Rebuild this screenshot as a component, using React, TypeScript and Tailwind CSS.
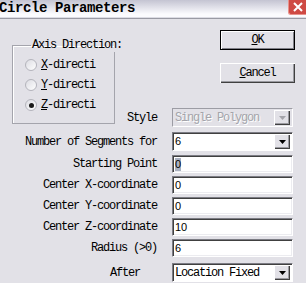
import React from 'react';

const mono = "font-['Liberation_Mono',monospace] text-[12px] tracking-[-1.2px] leading-[14px]";

function Arrow({ disabled }: { disabled?: boolean }) {
    return (
        <div className="w-[16px] h-[15px] bg-[#e2e1e7] shadow-[inset_1px_1px_0_#ffffff,inset_-1px_-1px_0_#404040,inset_-2px_-2px_0_#9a9aa0] flex items-center justify-center">
            <svg width="7" height="4" viewBox="0 0 7 4">
                <polygon points="0,0 7,0 3.5,4" fill={disabled ? '#a4a4aa' : '#000000'} />
            </svg>
        </div>
    );
}

function Combo({ text, disabled, mono: isMono }: { text: string; disabled?: boolean; mono?: boolean }) {
    return (
        <div
            className={`w-[121px] h-[19px] flex items-center justify-between pl-[2px] pr-[2px] border-[1px] ${disabled ? 'bg-[#e2e1e7] border-t-[#9c9ca4] border-l-[#9c9ca4] border-b-white border-r-white' : 'bg-white border-t-[#7c7c84] border-l-[#7c7c84] border-b-white border-r-white shadow-[inset_1px_1px_0_#404040]'}`}
        >
            <span
                className={`${isMono ? mono : "font-['Liberation_Sans',sans-serif] text-[11px]"} whitespace-nowrap ${disabled ? 'text-[#a4a4aa] [text-shadow:1px_1px_0_#ffffff]' : 'text-black'}`}
            >
                {text}
            </span>
            <Arrow disabled={disabled} />
        </div>
    );
}

function Field({ value, selected }: { value: string; selected?: boolean }) {
    return (
        <div className="w-[121px] h-[18px] bg-white border-[1px] border-t-[#7c7c84] border-l-[#7c7c84] border-b-white border-r-white shadow-[inset_1px_1px_0_#404040,inset_-1px_-1px_0_#ececf0] flex items-center pl-[2px]">
            <span className={`font-['Liberation_Sans',sans-serif] text-[11px] leading-[13px] text-black ${selected ? 'bg-[#aab1c0]' : ''}`}>
                {value}
            </span>
        </div>
    );
}

function Row({ label, children, pr = 0, mt = 'mt-[3px]' }: { label: string; children: React.ReactNode; pr?: number; mt?: string }) {
    return (
        <div className={`flex items-center ${mt}`}>
            <div className={`w-[157px] whitespace-nowrap text-right text-black ${mono}`} style={{ paddingRight: pr }}>
                {label}
            </div>
            <div className="ml-[15px]">{children}</div>
        </div>
    );
}

function Radio({ letter, rest, checked }: { letter: string; rest: string; checked?: boolean }) {
    return (
        <div className="h-[20px] flex items-center">
            <div className="w-[12px] h-[12px] rounded-full border border-[#b4b4bc] bg-gradient-to-br from-[#dcdce2] to-white flex items-center justify-center">
                {checked && <div className="w-[5px] h-[5px] rounded-full bg-[#1a1a1a]" />}
            </div>
            <span className={`ml-[4px] whitespace-nowrap text-black ${mono}`}>
                <span className="underline">{letter}</span>
                {rest}
            </span>
        </div>
    );
}

function Button({ first, rest, isDefault }: { first: string; rest: string; isDefault?: boolean }) {
    return (
        <div className={`w-[75px] h-[20px] ${isDefault ? 'border border-black' : ''}`}>
            <div
                className={`w-full h-full bg-[#e2e1e7] flex items-center justify-center text-black ${mono} ${isDefault ? 'shadow-[inset_1px_1px_0_#ffffff,inset_-1px_-1px_0_#808088]' : 'shadow-[inset_1px_1px_0_#ffffff,inset_-1px_-1px_0_#404040,inset_-2px_-2px_0_#9a9aa0]'}`}
            >
                <span>
                    <span className="underline">{first}</span>
                    {rest}
                </span>
            </div>
        </div>
    );
}

export default function App() {
    return (
        <div className="w-[306px] h-[283px] overflow-hidden bg-[#e2e1e7] flex flex-col relative">
            {/* Title bar */}
            <div className="flex flex-col">
                <div className="h-[14px] bg-gradient-to-b from-[#c4c4d2] to-[#fbfbfe] flex items-center">
                    <span className="font-['Liberation_Mono',monospace] font-bold text-[14px] tracking-[-0.4px] leading-[14px] text-black -ml-[1px] mt-[1px]">
                        Circle Parameters
                    </span>
                </div>
                <div className="h-[3px] bg-[#fbfbfe]" />
                <div className="h-[1px] bg-[#dcdce4]" />
                <div className="h-[1px] bg-[#9a9aa4]" />
            </div>
            <div className="absolute top-0 right-0 w-[18px] h-[15px] bg-[#cf4a44] rounded-bl-[3px] border-l border-b border-[#e8928c] flex items-center justify-center">
                <svg width="10" height="10" viewBox="0 0 10 10">
                    <path d="M1 1 L9 9 M9 1 L1 9" stroke="#ffffff" strokeWidth="2" />
                </svg>
            </div>

            {/* Top section */}
            <div className="flex">
                <fieldset className="ml-[12px] mt-[19px] w-[103px] h-[86px] border border-[#a4a4ac] shadow-[inset_1px_1px_0_#ffffff] pl-[12px] min-w-0">
                    <legend className={`ml-[6px] px-[1px] whitespace-nowrap text-black ${mono}`}>Axis Direction:</legend>
                    <div className="flex flex-col pt-[3px]">
                        <Radio letter="X" rest="-directi" />
                        <Radio letter="Y" rest="-directi" />
                        <Radio letter="Z" rest="-directi" checked />
                    </div>
                </fieldset>
                <div className="flex-1 flex flex-col">
                    <div className="flex flex-col items-end pr-[11px]">
                        <div className="mt-[11px]">
                            <Button first="O" rest="K" isDefault />
                        </div>
                        <div className="mt-[13px]">
                            <Button first="C" rest="ancel" />
                        </div>
                    </div>
                    <div className="flex items-center mt-[25px]">
                        <div className={`w-[42px] text-right text-black ${mono}`}>Style</div>
                        <div className="ml-[15px]">
                            <Combo text="Single Polygon" disabled mono />
                        </div>
                    </div>
                </div>
            </div>

            {/* Rows */}
            <Row label="Number of Segments for" mt="mt-[5px]">
                <Combo text="6" />
            </Row>
            <Row label="Starting Point" mt="mt-[4px]">
                <Field value="0" selected />
            </Row>
            <Row label="Center X-coordinate">
                <Field value="0" />
            </Row>
            <Row label="Center Y-coordinate">
                <Field value="0" />
            </Row>
            <Row label="Center Z-coordinate">
                <Field value="10" />
            </Row>
            <Row label="Radius (>0)">
                <Field value="6" />
            </Row>
            <Row label="After" pr={17} mt="mt-[6px]">
                <Combo text="Location Fixed" mono />
            </Row>
        </div>
    );
}
